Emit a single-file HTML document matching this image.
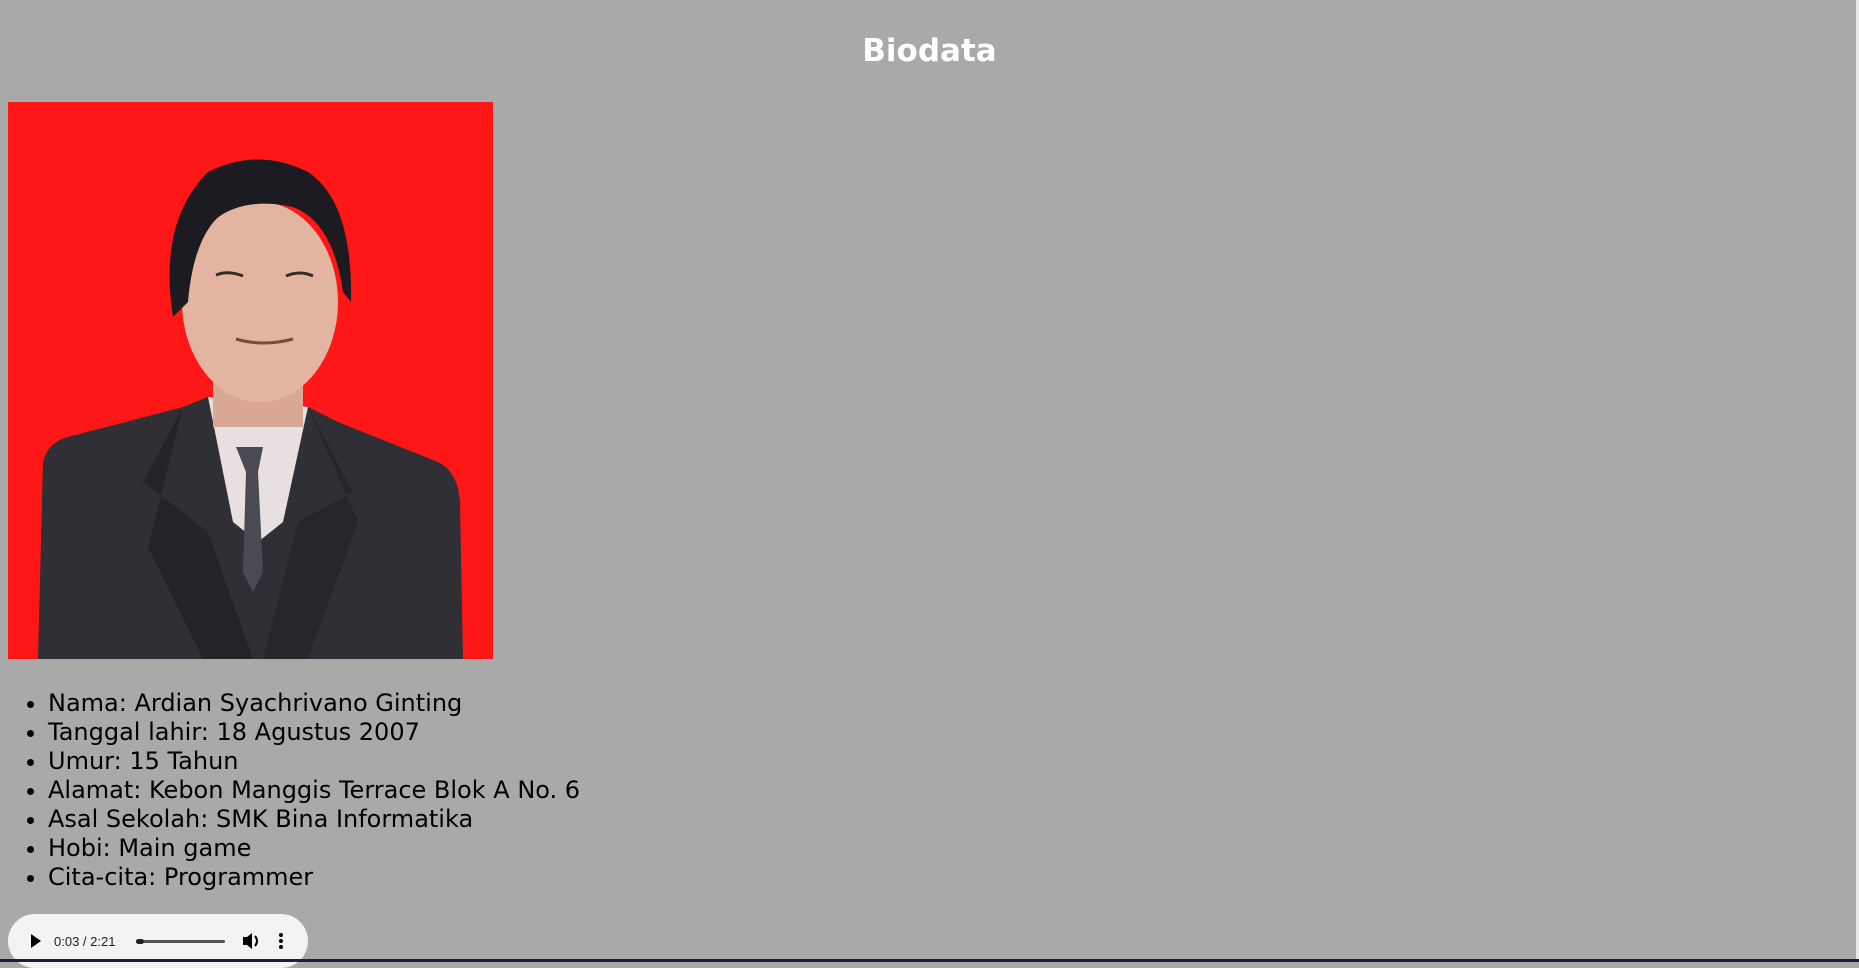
<!DOCTYPE html>
<html><head><meta charset="utf-8"><style>
html,body{margin:0;padding:0}
body{width:1859px;height:962px;background:#a9a9a9;overflow:hidden;position:relative;font-family:"DejaVu Sans","Liberation Sans",sans-serif}
h1{position:absolute;left:0;right:0;top:27px;margin:0;text-align:center;color:#fff;font-size:31px;font-weight:bold;line-height:48px}
.pic{position:absolute;left:8px;top:102px;width:485px;height:557px}
ul{position:absolute;left:0;top:689px;margin:0;padding-left:48px;font-size:24px;line-height:29px;color:#000}
.audio{position:absolute;left:8px;top:914px;width:300px;height:54px;background:#f1f3f4;border-radius:27px}
.bar{position:absolute;left:0;right:0;top:959px;height:3px;background:#1e1e3c;z-index:2}
.sb{position:absolute;right:0;top:0;width:3px;height:959px;background:#e8e8e8}
</style></head><body>
<h1>Biodata</h1>
<svg class="pic" viewBox="0 0 485 557" xmlns="http://www.w3.org/2000/svg">
<rect width="485" height="557" fill="#ff1616"/>
<path d="M30 557 L35 360 Q40 340 60 335 L175 305 L200 295 L300 305 L330 320 L430 360 Q450 370 452 400 L455 557 Z" fill="#2f2f35"/>
<path d="M200 295 L300 305 L275 420 L250 440 L225 420 Z" fill="#e8e0e0"/>
<path d="M228 345 L255 345 L250 370 L255 470 L245 490 L235 470 L238 370 Z" fill="#4a4a52"/>
<path d="M175 305 L135 380 L200 430 L245 557 L195 557 L140 445 Z" fill="#232328"/>
<path d="M300 305 L345 390 L290 420 L255 557 L300 557 L350 420 Z" fill="#26262b"/>
<rect x="205" y="250" width="90" height="75" fill="#d9a894"/>
<ellipse cx="252" cy="200" rx="78" ry="100" fill="#e3b5a0"/>
<path d="M165 215 Q150 120 200 70 Q250 45 300 70 Q345 100 343 200 L335 190 Q325 120 285 105 Q240 95 210 115 Q185 140 180 200 Z" fill="#1c1b22"/>
<path d="M208 173 Q220 168 235 174" stroke="#3a2a25" stroke-width="3" fill="none"/>
<path d="M278 174 Q292 168 305 174" stroke="#3a2a25" stroke-width="3" fill="none"/>
<path d="M228 237 Q255 245 285 237" stroke="#7a4a40" stroke-width="3" fill="none"/>
</svg>
<ul>
<li>Nama: Ardian Syachrivano Ginting</li>
<li>Tanggal lahir: 18 Agustus 2007</li>
<li>Umur: 15 Tahun</li>
<li>Alamat: Kebon Manggis Terrace Blok A No. 6</li>
<li>Asal Sekolah: SMK Bina Informatika</li>
<li>Hobi: Main game</li>
<li>Cita-cita: Programmer</li>
</ul>
<div class="audio">
<svg width="300" height="54" style="position:absolute;left:0;top:0">
<path d="M23 20 L33 27 L23 34 Z" fill="#000"/>
<text x="46" y="32" font-family="Liberation Sans,sans-serif" font-size="13" fill="#222">0:03 / 2:21</text>
<rect x="128" y="26" width="89" height="3" rx="1.5" fill="#555"/>
<rect x="128" y="25" width="8" height="5" rx="2.5" fill="#222"/>
<path d="M235 23 h4 l5 -4 v16 l-5 -4 h-4 z" fill="#000"/>
<path d="M247 22 q4 5 0 10" stroke="#000" stroke-width="2" fill="none"/>
<circle cx="273" cy="21" r="2" fill="#000"/><circle cx="273" cy="27" r="2" fill="#000"/><circle cx="273" cy="33" r="2" fill="#000"/>
</svg>
</div>
<div class="sb"></div>
<div class="bar"></div>
</body></html>
